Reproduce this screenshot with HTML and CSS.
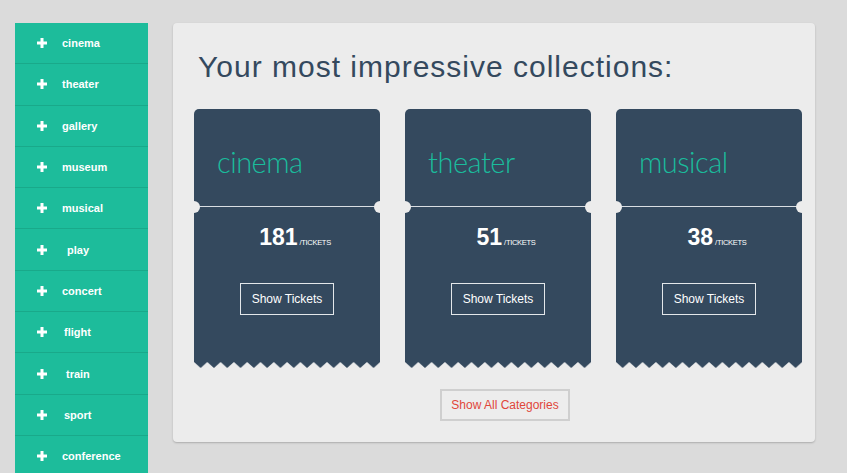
FILE: index.html
```html
<!DOCTYPE html>
<html>
<head>
<meta charset="utf-8">
<link rel="stylesheet" href="styles.css">
</head>
<body>
<div class="page">
  <nav class="sidebar">
    <a class="nav-item"><svg class="plus" viewBox="0 0 10 10"><rect x="3.5" y="0" width="3" height="10"/><rect x="0" y="3.5" width="10" height="3"/></svg><span>cinema</span></a>
    <a class="nav-item"><svg class="plus" viewBox="0 0 10 10"><rect x="3.5" y="0" width="3" height="10"/><rect x="0" y="3.5" width="10" height="3"/></svg><span>theater</span></a>
    <a class="nav-item"><svg class="plus" viewBox="0 0 10 10"><rect x="3.5" y="0" width="3" height="10"/><rect x="0" y="3.5" width="10" height="3"/></svg><span>gallery</span></a>
    <a class="nav-item"><svg class="plus" viewBox="0 0 10 10"><rect x="3.5" y="0" width="3" height="10"/><rect x="0" y="3.5" width="10" height="3"/></svg><span>museum</span></a>
    <a class="nav-item"><svg class="plus" viewBox="0 0 10 10"><rect x="3.5" y="0" width="3" height="10"/><rect x="0" y="3.5" width="10" height="3"/></svg><span>musical</span></a>
    <a class="nav-item"><svg class="plus" viewBox="0 0 10 10"><rect x="3.5" y="0" width="3" height="10"/><rect x="0" y="3.5" width="10" height="3"/></svg><span class="ind5">play</span></a>
    <a class="nav-item"><svg class="plus" viewBox="0 0 10 10"><rect x="3.5" y="0" width="3" height="10"/><rect x="0" y="3.5" width="10" height="3"/></svg><span>concert</span></a>
    <a class="nav-item"><svg class="plus" viewBox="0 0 10 10"><rect x="3.5" y="0" width="3" height="10"/><rect x="0" y="3.5" width="10" height="3"/></svg><span class="ind2">flight</span></a>
    <a class="nav-item"><svg class="plus" viewBox="0 0 10 10"><rect x="3.5" y="0" width="3" height="10"/><rect x="0" y="3.5" width="10" height="3"/></svg><span class="ind4">train</span></a>
    <a class="nav-item"><svg class="plus" viewBox="0 0 10 10"><rect x="3.5" y="0" width="3" height="10"/><rect x="0" y="3.5" width="10" height="3"/></svg><span class="ind2">sport</span></a>
    <a class="nav-item"><svg class="plus" viewBox="0 0 10 10"><rect x="3.5" y="0" width="3" height="10"/><rect x="0" y="3.5" width="10" height="3"/></svg><span>conference</span></a>
  </nav>

  <main class="panel">
    <h1 class="heading">Your most impressive collections:</h1>
    <div class="tickets">
      <div class="ticket">
        <div class="ticket-top"><span class="ticket-title">cinema</span></div>
        <div class="ticket-body">
          <div class="count"><span class="num">181</span><span class="unit">/tickets</span></div>
          <button class="btn-ticket">Show Tickets</button>
        </div>
        <svg class="teeth" width="186" height="6" viewBox="0 0 186 6" preserveAspectRatio="none"><defs><pattern id="z1" width="13.3" height="6" patternUnits="userSpaceOnUse"><polygon points="0,0 13.3,0 6.65,6"/></pattern></defs><rect width="186" height="6" fill="url(#z1)"/></svg>
      </div>
      <div class="ticket">
        <div class="ticket-top"><span class="ticket-title">theater</span></div>
        <div class="ticket-body">
          <div class="count"><span class="num">51</span><span class="unit">/tickets</span></div>
          <button class="btn-ticket">Show Tickets</button>
        </div>
        <svg class="teeth" width="186" height="6" viewBox="0 0 186 6" preserveAspectRatio="none"><defs><pattern id="z2" width="13.3" height="6" patternUnits="userSpaceOnUse"><polygon points="0,0 13.3,0 6.65,6"/></pattern></defs><rect width="186" height="6" fill="url(#z2)"/></svg>
      </div>
      <div class="ticket">
        <div class="ticket-top"><span class="ticket-title">musical</span></div>
        <div class="ticket-body">
          <div class="count"><span class="num">38</span><span class="unit">/tickets</span></div>
          <button class="btn-ticket">Show Tickets</button>
        </div>
        <svg class="teeth" width="186" height="6" viewBox="0 0 186 6" preserveAspectRatio="none"><defs><pattern id="z3" width="13.3" height="6" patternUnits="userSpaceOnUse"><polygon points="0,0 13.3,0 6.65,6"/></pattern></defs><rect width="186" height="6" fill="url(#z3)"/></svg>
      </div>
    </div>
    <div class="all-row"><button class="btn-all">Show All Categories</button></div>
  </main>
</div>
</body>
</html>
```
FILE: styles.css
```css
* { box-sizing: border-box; }
html, body { margin: 0; padding: 0; }
body {
  background: #dbdbdb;
  font-family: "Liberation Sans", Arial, Helvetica, sans-serif;
  width: 847px;
  height: 473px;
  overflow: hidden;
}
.page {
  display: flex;
  align-items: flex-start;
  padding: 23px 0 0 15px;
}
.sidebar {
  width: 133px;
  background: #1dbc9b;
  display: flex;
  flex-direction: column;
  flex-shrink: 0;
}
.nav-item {
  height: 41.3px;
  display: flex;
  align-items: center;
  padding-left: 22px;
  border-bottom: 1px solid #19a98a;
  color: #fff;
  font-weight: bold;
  font-size: 11px;
}
.plus {
  width: 10px;
  height: 10px;
  fill: #fff;
  margin-right: 15px;
  flex-shrink: 0;
}
.ind2 { margin-left: 2px; }
.ind4 { margin-left: 4px; }
.ind5 { margin-left: 5px; }

.panel {
  margin-left: 25px;
  width: 642px;
  height: 419px;
  background: #ececec;
  border-radius: 4px;
  box-shadow: 0 1px 2px rgba(0,0,0,0.22);
  padding: 27px 21px 0 21px;
}
.heading {
  margin: 0 0 26px 4px;
  font-size: 30px;
  line-height: 33px;
  font-weight: normal;
  letter-spacing: 1px;
  color: #34495e;
}
.tickets {
  display: flex;
  gap: 25px;
}
.ticket {
  width: 186px;
  display: flex;
  flex-direction: column;
}
.ticket-top {
  position: relative;
  height: 98px;
  background: #34495e;
  border-radius: 5px 5px 0 0;
  border-bottom: 1px solid #d9dee3;
  padding: 36px 0 0 23px;
}
.ticket-top::before,
.ticket-top::after {
  content: "";
  position: absolute;
  bottom: -6.5px;
  width: 12px;
  height: 12px;
  border-radius: 50%;
  background: #ececec;
}
.ticket-top::before { left: -6px; }
.ticket-top::after { right: -6px; }
.ticket-title {
  font-family: "Lato", "Open Sans", sans-serif;
  font-weight: 300;
  font-size: 29px;
  line-height: 34px;
  color: #1abc9c;
  letter-spacing: -0.5px;
}
.ticket-body {
  height: 155px;
  background: #34495e;
  display: flex;
  flex-direction: column;
  align-items: center;
  padding-top: 18px;
}
.count {
  color: #fff;
  line-height: 24px;
  padding-left: 16px;
}
.num {
  font-size: 23px;
  font-weight: bold;
}
.unit {
  font-size: 7.5px;
  text-transform: uppercase;
  letter-spacing: -0.3px;
  margin-left: 2px;
}
.btn-ticket {
  margin-top: 28px;
  height: 32px;
  padding: 0 10.5px;
  background: transparent;
  border: 1px solid #e3e7ea;
  color: #fff;
  font-family: "Liberation Sans", Arial, sans-serif;
  font-size: 12px;
}
.teeth {
  display: block;
  fill: #34495e;
}
.all-row {
  display: flex;
  justify-content: center;
  padding-left: 22px;
  margin-top: 21px;
}
.btn-all {
  height: 32px;
  padding: 0 9px;
  background: #ededed;
  border: 2px solid #cfcfcf;
  color: #e0463a;
  font-family: "Liberation Sans", Arial, sans-serif;
  font-size: 12px;
}
```
